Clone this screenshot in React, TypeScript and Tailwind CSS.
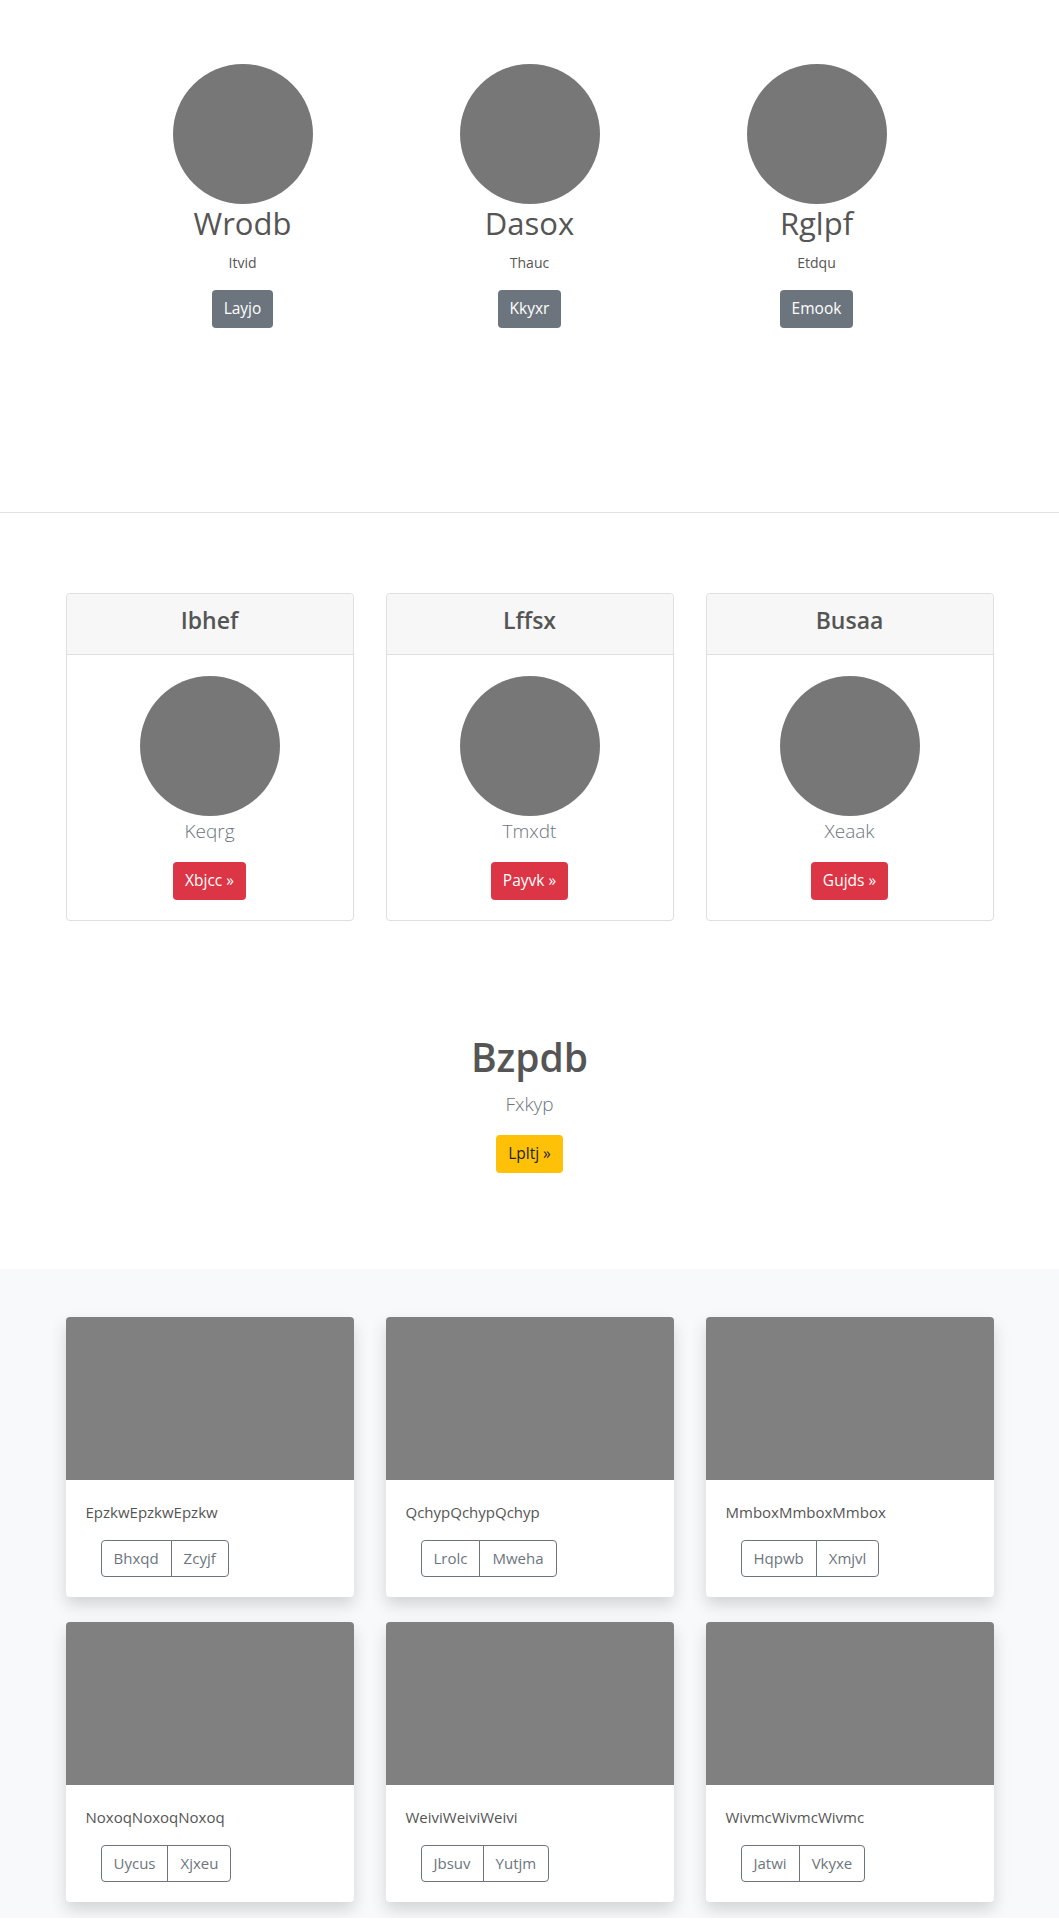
import React from "react";

const font = { fontFamily: '"Open Sans", "Noto Sans", Arial, sans-serif' };

const tops = [
  { name: "Wrodb", sub: "Itvid", btn: "Layjo" },
  { name: "Dasox", sub: "Thauc", btn: "Kkyxr" },
  { name: "Rglpf", sub: "Etdqu", btn: "Emook" },
];

const cards = [
  { title: "Ibhef", sub: "Keqrg", btn: "Xbjcc »" },
  { title: "Lffsx", sub: "Tmxdt", btn: "Payvk »" },
  { title: "Busaa", sub: "Xeaak", btn: "Gujds »" },
];

const albums = [
  { text: "EpzkwEpzkwEpzkw", a: "Bhxqd", b: "Zcyjf" },
  { text: "QchypQchypQchyp", a: "Lrolc", b: "Mweha" },
  { text: "MmboxMmboxMmbox", a: "Hqpwb", b: "Xmjvl" },
  { text: "NoxoqNoxoqNoxoq", a: "Uycus", b: "Xjxeu" },
  { text: "WeiviWeiviWeivi", a: "Jbsuv", b: "Yutjm" },
  { text: "WivmcWivmcWivmc", a: "Jatwi", b: "Vkyxe" },
];

export default function App() {
  return (
    <div style={font} className="w-full bg-white text-[#555]">
      {/* Top section */}
      <section className="h-[513px] border-b border-[#e2e2e2] pt-[64px]">
        <div className="mx-auto grid w-[861px] grid-cols-3">
          {tops.map((t) => (
            <div key={t.name} className="flex flex-col items-center">
              <div className="h-[140px] w-[140px] rounded-full bg-[#777777]" />
              <div className="text-[31px] leading-[38px] font-normal text-[#555]">{t.name}</div>
              <div className="mt-[10px] text-[14px] leading-[21px] text-[#555]">{t.sub}</div>
              <button className="mt-[17px] h-[38px] rounded-[4px] bg-[#6c757d] px-[12px] text-[15.5px] text-white">
                {t.btn}
              </button>
            </div>
          ))}
        </div>
      </section>

      {/* Cards section */}
      <section className="pt-[80px]">
        <div className="mx-auto grid w-[928px] grid-cols-3 gap-[32px]">
          {cards.map((c) => (
            <div key={c.title} className="flex flex-col rounded-[4px] border border-[#dfdfdf] bg-white">
              <div className="rounded-t-[4px] border-b border-[#dfdfdf] bg-[#f7f7f7] pt-[12px] pb-[19px] text-center text-[23px] leading-[29px] font-semibold text-[#555]">
                {c.title}
              </div>
              <div className="flex flex-col items-center px-5 pt-[21px] pb-[20px]">
                <div className="h-[140px] w-[140px] rounded-full bg-[#777777]" />
                <div className="text-[19px] leading-[30px] font-light text-[#6c757d]">{c.sub}</div>
                <button className="mt-[16px] h-[38px] rounded-[4px] bg-[#dc3545] px-[12px] text-[15.5px] text-white">
                  {c.btn}
                </button>
              </div>
            </div>
          ))}
        </div>
      </section>

      {/* Jumbo section */}
      <section className="flex flex-col items-center pt-[112px] pb-[96px]">
        <h1 className="text-[39px] leading-[48px] font-semibold text-[#555]">Bzpdb</h1>
        <p className="mt-[8px] text-[19px] leading-[30px] font-light text-[#6c757d]">Fxkyp</p>
        <button className="mt-[16px] h-[38px] rounded-[4px] bg-[#ffc107] px-[12px] text-[15.5px] text-[#212529]">
          Lpltj »
        </button>
      </section>

      {/* Album section */}
      <section className="bg-[#f8f9fa] pt-[48px] pb-[16px]">
        <div className="mx-auto grid w-[928px] grid-cols-3 gap-x-[32px] gap-y-[25px]">
          {albums.map((a) => (
            <div
              key={a.text}
              className="overflow-hidden rounded-[4px] bg-white shadow-[0_8px_16px_rgba(0,0,0,0.15)]"
            >
              <div className="h-[163px] w-full bg-[#808080]" />
              <div className="p-5">
                <p className="text-[15px] leading-[24px] text-[#555]">{a.text}</p>
                <div className="mt-[16px] ml-[15px] flex">
                  <button className="h-[37px] rounded-l-[4px] border border-[#6c757d] px-[12px] text-[15px] text-[#6c757d]">
                    {a.a}
                  </button>
                  <button className="-ml-px h-[37px] rounded-r-[4px] border border-[#6c757d] px-[12px] text-[15px] text-[#6c757d]">
                    {a.b}
                  </button>
                </div>
              </div>
            </div>
          ))}
        </div>
      </section>
    </div>
  );
}
